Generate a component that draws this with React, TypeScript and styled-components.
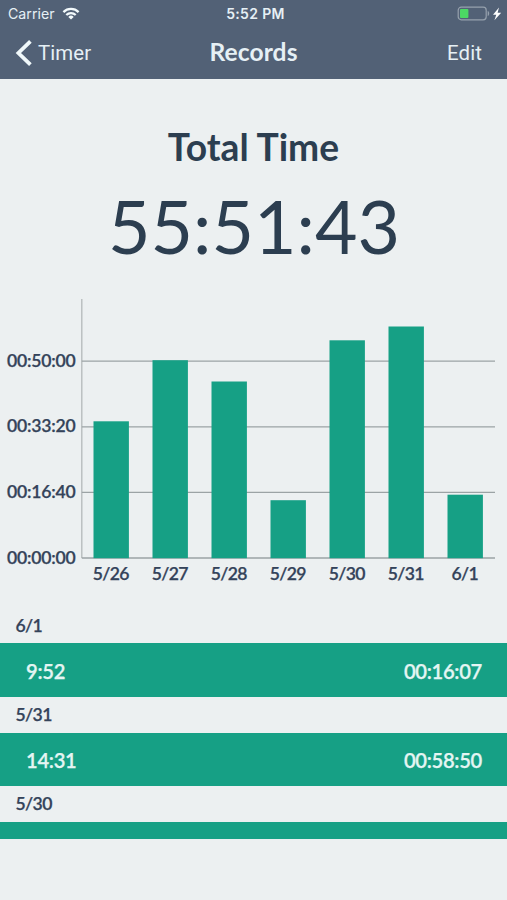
import React from "react";
import styled, { createGlobalStyle } from "styled-components";

const GlobalStyle = createGlobalStyle`
  * { box-sizing: border-box; }
  body { margin: 0; background: #ecf0f1; }
`;

const ink = "#2c3e50";
const green = "#16a085";

const Screen = styled.div`
  width: 507px;
  height: 900px;
  overflow: hidden;
  display: flex;
  flex-direction: column;
  background: #ecf0f1;
  color: ${ink};
  font-family: Lato, sans-serif;
`;

const Header = styled.header`
  flex: none;
  height: 79px;
  background: #526176;
  color: #e6f0f5;
`;

const Bar = styled.div<{ $height: number }>`
  display: grid;
  grid-template-columns: 1fr auto 1fr;
  align-items: center;
  height: ${(p) => p.$height}px;
`;

const Side = styled.div<{ $end?: boolean; $pad: number }>`
  display: flex;
  align-items: center;
  justify-content: ${(p) => (p.$end ? "flex-end" : "flex-start")};
  ${(p) => (p.$end ? "padding-right" : "padding-left")}: ${(p) => p.$pad}px;
`;

const Carrier = styled.span`
  font: 400 14.2px/18px Inter, sans-serif;
  margin-right: 7px;
`;

const Clock = styled.span`
  font: 600 14px/18px Inter, sans-serif;
  letter-spacing: 0.35px;
  padding-left: 4px;
`;

const NavAction = styled.button`
  border: 0;
  padding: 0;
  background: none;
  color: inherit;
  font: 400 20.4px/28px Roboto, sans-serif;
  letter-spacing: 0.1px;
`;

const BackButton = styled(NavAction)`
  display: flex;
  align-items: center;
  gap: 5px;
`;

const Title = styled.h1`
  margin: 0;
  font-size: 24.6px;
  line-height: 30px;
  font-weight: 700;
  letter-spacing: 0.1px;
  transform: translateY(-1px);
`;

const Summary = styled.section`
  flex: none;
  height: 212px;
  padding-top: 45px;
  text-align: center;
`;

const SummaryTitle = styled.h2`
  margin: 0;
  font-size: 37.2px;
  line-height: 46px;
  font-weight: 700;
`;

const TotalTime = styled.div`
  margin-top: 12px;
  font-size: 73.4px;
  line-height: 88px;
  padding-left: 1px;
`;

const Chart = styled.svg`
  display: block;
  flex: none;
  font-family: Lato, sans-serif;
  font-size: 17.6px;
  letter-spacing: -0.2px;
  font-weight: 600;
  fill: #34435a;
  stroke-width: 0.25px;
`;

const TimeLabel = styled.text`
  stroke: #34435a;
`;

const DayLabel = styled.text`
  stroke: #34435a;
  letter-spacing: -0.6px;
`;

const DayHeader = styled.h3`
  flex: none;
  margin: 0;
  height: 35.8px;
  padding-left: 15.5px;
  font-size: 17.6px;
  letter-spacing: -0.6px;
  line-height: 36px;
  font-weight: 600;
  color: #34435a;
  -webkit-text-stroke: 0.25px #34435a;
`;

const RecordRow = styled.div<{ $height?: number }>`
  flex: none;
  display: flex;
  align-items: center;
  justify-content: space-between;
  height: ${(p) => p.$height ?? 53.5}px;
  padding: 1px 25px 0 26px;
  background: ${green};
  color: #e4f5f3;
  font-size: 20.2px;
  letter-spacing: -0.3px;
  font-weight: 600;
  -webkit-text-stroke: 0.25px #e4f5f3;
`;

const Records = styled.section`
  display: flex;
  flex-direction: column;
  padding-top: 16.6px;
`;

const bars = [
  { day: "5/26", top: 130.3 },
  { day: "5/27", top: 69.2 },
  { day: "5/28", top: 90.5 },
  { day: "5/29", top: 209.2 },
  { day: "5/30", top: 49.3 },
  { day: "5/31", top: 35.5 },
  { day: "6/1", top: 203.7 },
];

const ticks = [
  { label: "00:50:00", y: 70.2 },
  { label: "00:33:20", y: 135.8 },
  { label: "00:16:40", y: 201.4 },
  { label: "00:00:00", y: 267 },
];

const WifiIcon = () => (
  <svg width="18" height="13" viewBox="0 0 18 13" fill="none" stroke="#f3fafc" strokeWidth="2.2">
    <path d="M1.4 5.1a10.8 10.8 0 0 1 15.2 0" />
    <path d="M4.3 8a6.7 6.7 0 0 1 9.4 0" />
    <path d="M9 12.6 6.3 9.9a3.9 3.9 0 0 1 5.4 0Z" fill="#f3fafc" stroke="none" />
  </svg>
);

const BatteryIcon = () => (
  <svg width="46" height="16" viewBox="0 0 46 16">
    <rect x="1.2" y="1.2" width="28" height="12.6" rx="3" fill="none" stroke="#96a1ad" strokeWidth="1.2" />
    <path d="M30.7 5c2 .6 2 4.4 0 5Z" fill="#96a1ad" />
    <rect x="3" y="3.1" width="8.4" height="8.8" rx="1" fill="#4cd964" />
    <path d="M42 1.6 36 8.7h3.3L37.4 14.2l6.8-7.5h-3.6Z" fill="#fff" />
  </svg>
);

const BackIcon = () => (
  <svg width="18" height="28" viewBox="0 0 18 28" fill="none" stroke="#f0f8fa" strokeWidth="3.8">
    <path d="M15.4 2.3 3.4 14l12 11.7" />
  </svg>
);

export default function App() {
  return (
    <Screen>
      <GlobalStyle />
      <Header>
        <Bar $height={27}>
          <Side $pad={8}>
            <Carrier>Carrier</Carrier>
            <WifiIcon />
          </Side>
          <Clock>5:52 PM</Clock>
          <Side $end $pad={4}>
            <BatteryIcon />
          </Side>
        </Bar>
        <Bar $height={51}>
          <Side $pad={15}>
            <BackButton>
              <BackIcon />
              <span>Timer</span>
            </BackButton>
          </Side>
          <Title>Records</Title>
          <Side $end $pad={25}>
            <NavAction>Edit</NavAction>
          </Side>
        </Bar>
      </Header>
      <Summary>
        <SummaryTitle>Total Time</SummaryTitle>
        <TotalTime>55:51:43</TotalTime>
      </Summary>
      <Chart width="507" height="300" viewBox="0 0 507 300">
        <path d="M81.8 8V267" stroke="#b4b9ba" strokeWidth="1.3" />
        {ticks.map((t) => (
          <g key={t.label}>
            <path d={`M81.8 ${t.y}H495`} stroke="#9ba3a5" strokeWidth="1.3" />
            <TimeLabel x="75.6" y={t.y + 5.5} textAnchor="end">{t.label}</TimeLabel>
          </g>
        ))}
        {bars.map((b, i) => (
          <g key={b.day}>
            <rect x={93.5 + i * 59} y={b.top} width="35.4" height={267.2 - b.top} fill={green} />
            <DayLabel x={110.8 + i * 59} y="289.3" textAnchor="middle">{b.day}</DayLabel>
          </g>
        ))}
      </Chart>
      <Records>
        <DayHeader>6/1</DayHeader>
        <RecordRow><span>9:52</span><span>00:16:07</span></RecordRow>
        <DayHeader>5/31</DayHeader>
        <RecordRow><span>14:31</span><span>00:58:50</span></RecordRow>
        <DayHeader>5/30</DayHeader>
        <RecordRow $height={17} />
      </Records>
    </Screen>
  );
}
